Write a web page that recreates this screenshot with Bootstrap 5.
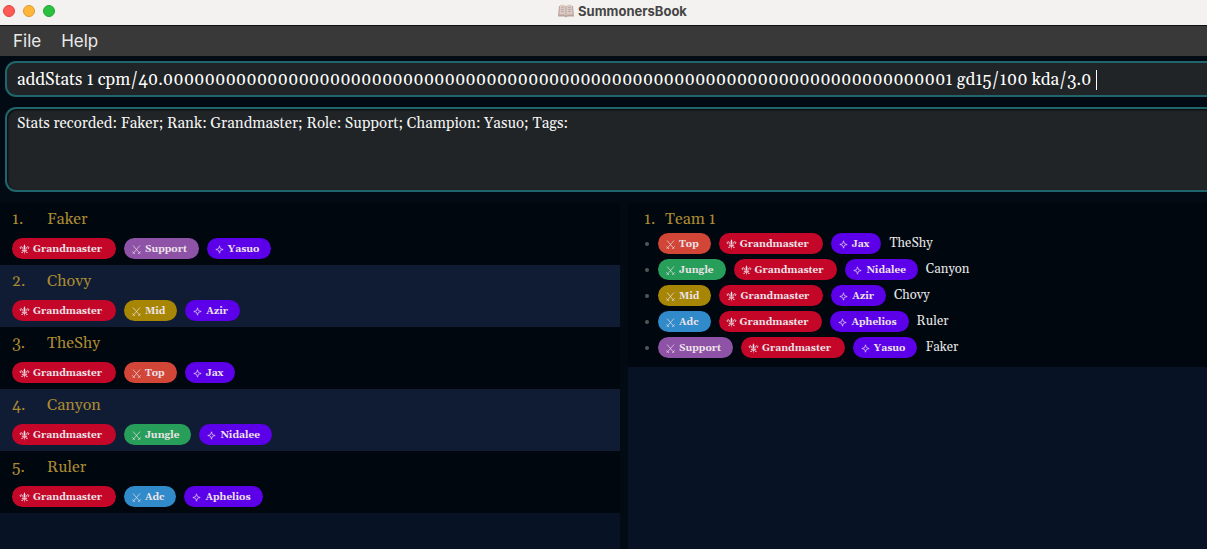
<!DOCTYPE html>
<html lang="en">
<head>
<meta charset="utf-8">
<meta name="viewport" content="width=device-width, initial-scale=1">
<title>SummonersBook</title>
<link href="https://cdn.jsdelivr.net/npm/bootstrap@5.3.0/dist/css/bootstrap.min.css" rel="stylesheet">
<style>
  body { background: #020a14; color: #e6e6e6; font-family: Gelasio, Georgia, "Liberation Serif", serif; }
  .title-bar { background: #f4f2f0; color: #454545; border-bottom: 1px solid #111; height: 26px; padding: 0 0 4px 38px; font: 700 13px/20px Inter, sans-serif; }
  .traffic { left: 3px; top: 5px; gap: 8px; }
  .dot { width: 12px; height: 12px; border-radius: 50%; border: 1px solid; }
  .dot-close { background: #ff5b54; border-color: #dd453f; }
  .dot-min { background: #ffb63a; border-color: #dc9a2d; }
  .dot-max { background: #2bc13f; border-color: #24a435; }
  .menu-strip { background: #393939; height: 30px; padding: 0 13px; gap: 20px; font: 400 17px/30px Inter, sans-serif; }
  .menu-strip button { color: #e9e9e9; background: none; }
  .field-box { background: #202426; border: 2px solid #20656b; border-right: 0; border-radius: 11px 0 0 11px; margin-left: 5px; }
  .command-box { height: 36px; margin-top: 5px; padding: 2px 10px 0; gap: 4px; }
  .command-box input { width: 103ch; min-width: 0; background: none; color: #fff; font-size: 17px; line-height: 30px; outline: 0; }
  .text-cursor { width: 1px; height: 20px; background: #fff; }
  .result-box { height: 85px; margin-top: 10px; box-shadow: inset 1px 1px 2px #06090c; }
  .result-box textarea { background: none; color: #f4f4f4; font-size: 15px; line-height: 20px; padding: 5px 10px; resize: none; outline: 0; }
  .panes { display: grid; grid-template-columns: 620fr 579fr; gap: 8px; margin-top: 11px; }
  .pane { background: #071224; min-width: 0; }
  .player { height: 62px; padding: 6px 12px; background: #01070f; }
  .player:nth-child(even) { background: #101b34; }
  .heading-line { color: #ab8b32; font-size: 16px; line-height: 20px; }
  .rank-no { width: 35px; }
  .player .tags { margin-top: 9px; }
  .tags { gap: 8px; }
  .pill { display: inline-flex; align-items: center; gap: 3px; height: 21px; padding: 0 12px 0 7px; border-radius: 11px; color: #eee4ea; font-size: 10px; font-weight: 700; line-height: 20px; white-space: nowrap; }
  .pill svg { width: 11px; height: 11px; margin-top: 2px; flex: none; }
  .grandmaster { background: #c40728; padding-right: 14px; }
  .champion { background: #5b00e8; }
  .support { background: #8e53a6; }
  .mid { background: #a88605; }
  .top-lane { background: #d24638; }
  .jungle { background: #279f5b; }
  .adc { background: #318ac9; }
  .team { background: #01070f; padding: 6px 16px 9px; }
  .team-no { width: 21px; }
  .members { margin-top: 4px; display: grid; gap: 5px; }
  .members li { font-size: 13px; line-height: 21px; }
  .bullet { width: 4px; height: 4px; border-radius: 50%; background: #555; margin: 1px 1px 0; }
</style>
</head>
<body class="d-flex flex-column min-vh-100">
<svg class="d-none" aria-hidden="true">
  <symbol id="i-fleur" viewBox="0 0 11 11"><path fill="currentColor" d="M5.5 .2C6.6 1.8 6.6 3.2 6 5.8H5C4.4 3.2 4.4 1.8 5.5 .2zM2.9 6H8.1V6.8H2.9zM5 7H6L5.5 10.8z"/><path fill="none" stroke="currentColor" stroke-width=".9" d="M4.2 5.8C3.8 2.4 1.2 2 1.2 3.8 1.2 4.4 1.6 4.8 2.2 4.6M6.8 5.8C7.2 2.4 9.8 2 9.8 3.8 9.8 4.4 9.4 4.8 8.8 4.6M4.3 7C4 8.6 3.2 9 2.4 8.4M6.7 7C7 8.6 7.8 9 8.6 8.4"/></symbol>
  <symbol id="i-swords" viewBox="0 0 11 11"><path fill="none" stroke="currentColor" stroke-width=".8" opacity=".85" d="M2 1.5 9.2 9.8M9 1.5 1.8 9.8M1.3 7.4 4 9.9M9.7 7.4 7 9.9"/></symbol>
  <symbol id="i-star" viewBox="0 0 11 11"><path fill="none" stroke="currentColor" stroke-width=".8" opacity=".85" d="M5.5 1.8 6.4 4.6 9.2 5.5 6.4 6.4 5.5 9.2 4.6 6.4 1.8 5.5 4.6 4.6z"/></symbol>
</svg>

<header class="title-bar position-relative d-flex justify-content-center">
  <div class="traffic position-absolute d-flex"><span class="dot dot-close"></span><span class="dot dot-min"></span><span class="dot dot-max"></span></div>
  <div class="d-flex align-items-center gap-1">
    <svg width="16" height="14" viewBox="0 0 16 14" aria-hidden="true">
      <path fill="#b9a29b" d="M1 2H15L16 12.5H9.5L8 13.5 6.5 12.5H0z"/>
      <path fill="#dccbc0" d="M2 1.2C4 .5 6.5.8 8 2.2 9.5.8 12 .5 14 1.2L14.6 10.8C12 10.2 9.5 10.6 8 12 6.5 10.6 4 10.2 1.4 10.8z"/>
      <path fill="none" stroke="#b8a5ad" d="M8 2.2V12M3.4 3.2 5.8 3.6M3.2 5.3 5.8 5.7M3 7.4 5.8 7.8M12.6 3.2 10.2 3.6M12.8 5.3 10.2 5.7M13 7.4 10.2 7.8"/>
    </svg>
    <span>SummonersBook</span>
  </div>
</header>

<nav class="menu-strip d-flex" aria-label="Application menu">
  <button type="button" class="border-0 p-0">File</button>
  <button type="button" class="border-0 p-0">Help</button>
</nav>

<div class="field-box command-box d-flex align-items-center">
  <input type="text" class="border-0 p-0" aria-label="Command" spellcheck="false" value="addStats 1 cpm/40.0000000000000000000000000000000000000000000000000000000000000000000000000001 gd15/100 kda/3.0 ">
  <span class="text-cursor"></span>
</div>
<div class="field-box result-box">
  <textarea class="d-block w-100 h-100 border-0" aria-label="Result" readonly spellcheck="false">Stats recorded: Faker; Rank: Grandmaster; Role: Support; Champion: Yasuo; Tags:</textarea>
</div>

<main class="panes flex-grow-1">
  <section class="pane" id="players" aria-label="Players"></section>
  <section class="pane" aria-label="Teams">
    <article class="team">
      <div class="heading-line d-flex"><span class="team-no">1.</span><span>Team 1</span></div>
      <ul class="members list-unstyled mb-0" id="members"></ul>
    </article>
  </section>
</main>

<script src="https://cdn.jsdelivr.net/npm/bootstrap@5.3.0/dist/js/bootstrap.bundle.min.js"></script>
<script>
  const players = {
    Faker: ['Support', 'support', 'Yasuo'],
    Chovy: ['Mid', 'mid', 'Azir'],
    TheShy: ['Top', 'top-lane', 'Jax'],
    Canyon: ['Jungle', 'jungle', 'Nidalee'],
    Ruler: ['Adc', 'adc', 'Aphelios']
  };
  const pill = (cls, icon, text) => `<span class="pill ${cls}"><svg aria-hidden="true"><use href="#i-${icon}"/></svg>${text}</span>`;
  const rank = pill('grandmaster', 'fleur', 'Grandmaster');
  const role = p => pill(p[1], 'swords', p[0]);
  const champion = p => pill('champion', 'star', p[2]);
  document.getElementById('players').innerHTML = Object.entries(players).map(([name, p], i) =>
    `<article class="player"><div class="heading-line d-flex"><span class="rank-no">${i + 1}.</span><span>${name}</span></div>
     <div class="tags d-flex">${rank}${role(p)}${champion(p)}</div></article>`).join('');
  document.getElementById('members').innerHTML = ['TheShy', 'Canyon', 'Chovy', 'Ruler', 'Faker'].map(name => {
    const p = players[name];
    return `<li class="tags d-flex align-items-center"><span class="bullet"></span>${role(p)}${rank}${champion(p)}<span>${name}</span></li>`;
  }).join('');
</script>
</body>
</html>
